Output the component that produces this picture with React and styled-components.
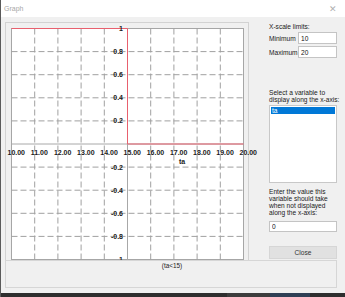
import React from 'react';
import styled, { createGlobalStyle } from 'styled-components';

const GlobalStyle = createGlobalStyle`
  html, body { margin: 0; padding: 0; background: #f0f0f0; }
  body { font-family: 'Liberation Sans', Arial, sans-serif; }
`;

const Window = styled.div`
  width: 345px;
  height: 297px;
  display: flex;
  flex-direction: column;
  background: #f0f0f0;
  box-sizing: border-box;
  border-left: 1px solid #5a5a5a;
  overflow: hidden;
`;

const TitleBar = styled.div`
  height: 17px;
  flex: none;
  background: #ffffff;
  display: flex;
  align-items: center;
  justify-content: space-between;
  padding: 0 8px 0 3px;
  color: #a8a8a8;
  font-size: 7px;
`;

const CloseX = styled.span`
  font-size: 9px;
  color: #b0b0b0;
`;

const Body = styled.div`
  flex: 1;
  display: flex;
  flex-direction: column;
  padding: 5px 8px 5px 4px;
`;

const TopRow = styled.div`
  height: 238px;
  display: flex;
  gap: 20px;
`;

const ChartPanel = styled.div`
  width: 244px;
  flex: none;
  box-sizing: border-box;
  border: 1px solid #d2d2d2;
  border-bottom: none;
  padding: 5px 4px 0 5px;
`;

const ChartSvg = styled.svg`
  display: block;
  overflow: visible;
`;

const SidePanel = styled.div`
  width: 68px;
  min-width: 0;
  flex: none;
  display: flex;
  flex-direction: column;
  padding-top: 1px;
  font-size: 6.6px;
  color: #1a1a1a;
`;

const Caption = styled.div`
  margin-top: ${p => p.$gap || 0}px;
  line-height: ${p => p.$lh || 7}px;
  white-space: nowrap;
`;

const LimitRow = styled.div`
  display: flex;
  align-items: center;
  height: 12px;
  margin-top: ${p => p.$gap || 0}px;
`;

const LimitLabel = styled.span`
  width: 29px;
  flex: none;
`;

const Field = styled.input`
  flex: ${p => (p.$full ? 'none' : 1)};
  width: ${p => (p.$full ? '68px' : '10px')};
  min-width: 0;
  height: ${p => p.$h || 12}px;
  margin: ${p => p.$gap || 0}px 0 0 0;
  box-sizing: border-box;
  border: 1px solid #c4c4c4;
  background: #ffffff;
  padding: 0 2px;
  font-family: inherit;
  font-size: 6.6px;
  color: #111;
  outline: none;
`;

const ListBox = styled.div`
  margin-top: 2px;
  height: 78px;
  box-sizing: border-box;
  border: 1px solid #c8c8c8;
  background: #ffffff;
  padding: 1px 1px 0 1px;
`;

const ListItem = styled.div`
  height: 7px;
  line-height: 7px;
  padding-left: 1px;
  background: ${p => (p.$selected ? '#0078d7' : 'transparent')};
  color: ${p => (p.$selected ? '#ffffff' : '#111')};
`;

const CloseButton = styled.button`
  margin-top: 14px;
  width: 68px;
  height: 13px;
  box-sizing: border-box;
  border: 1px solid #d6d6d6;
  background: #e1e1e1;
  color: #333;
  font-family: inherit;
  font-size: 6.6px;
  padding: 0;
`;

const StatusBox = styled.div`
  height: 28px;
  flex: none;
  box-sizing: border-box;
  border: 1px solid #d6d6d6;
  display: flex;
  justify-content: center;
  padding-left: 2px;
  font-size: 6.4px;
  line-height: 9px;
  color: #222;
`;

const Taskbar = styled.div`
  height: 4px;
  flex: none;
  display: flex;
  background: #2e2e2e;
`;

const TaskSegment = styled.div`
  width: ${p => p.$w}px;
  margin-left: ${p => p.$ml || 0}px;
  background: ${p => p.$c};
`;

const W = 232;
const H = 231;
const px = x => 0.5 + ((x - 10) / 10) * W;
const py = y => 0.5 + ((1 - y) / 2) * H;

const xTicks = [10, 11, 12, 13, 14, 15, 16, 17, 18, 19, 20];
const yTicks = [1, 0.8, 0.6, 0.4, 0.2, 0, -0.2, -0.4, -0.6, -0.8, -1];

const StepChart = () => (
  <ChartSvg width={233} height={232}>
    <defs>
      <clipPath id="labelClip">
        <rect x={-20} y={-10} width={280} height={242} />
      </clipPath>
    </defs>
    <rect x={0.5} y={0.5} width={W} height={H} fill="#ffffff" stroke="#a6a6a6" />
    {xTicks.slice(1, -1).filter(t => t !== 15).map(t => (
      <line key={'vx' + t} x1={px(t)} x2={px(t)} y1={0.5} y2={H + 0.5}
        stroke="#a0a0a0" strokeDasharray="6 3" />
    ))}
    {yTicks.slice(1, -1).filter(t => t !== 0).map(t => (
      <line key={'hy' + t} x1={0.5} x2={W + 0.5} y1={py(t)} y2={py(t)}
        stroke="#a0a0a0" strokeDasharray="6 3" />
    ))}
    <line x1={px(15)} x2={px(15)} y1={0.5} y2={H + 0.5} stroke="#a8a8a8" />
    <line x1={0.5} x2={W + 0.5} y1={py(0)} y2={py(0)} stroke="#a8a8a8" />
    <path d={`M ${px(10)} ${py(1)} H ${px(15)} V ${py(0)} H ${px(20)}`}
      fill="none" stroke="#e8606e" />
    <g clipPath="url(#labelClip)" fontFamily="'Liberation Sans', Arial, sans-serif"
      fontSize="7" fontWeight="bold" fill="#1a1a1a">
      {yTicks.filter(t => t !== 0).map(t => (
        <text key={'ly' + t} x={112} y={py(t) + 2.5} textAnchor="end">{t}</text>
      ))}
      {xTicks.map(t => (
        <text key={'lx' + t} x={px(t) - 4} y={126.5}>{t.toFixed(2)}</text>
      ))}
      <text x={171} y={135.5} textAnchor="middle">ta</text>
    </g>
  </ChartSvg>
);

export default function App() {
  return (
    <>
      <GlobalStyle />
      <Window>
        <TitleBar>
          <span>Graph</span>
          <CloseX>✕</CloseX>
        </TitleBar>
        <Body>
          <TopRow>
            <ChartPanel>
              <StepChart />
            </ChartPanel>
            <SidePanel>
              <Caption $lh={8}>X-scale limits:</Caption>
              <LimitRow $gap={1}>
                <LimitLabel>Minimum</LimitLabel>
                <Field defaultValue="10" />
              </LimitRow>
              <LimitRow $gap={2}>
                <LimitLabel>Maximum</LimitLabel>
                <Field defaultValue="20" />
              </LimitRow>
              <Caption $gap={31}>
                Select a variable to<br />display along the x-axis:
              </Caption>
              <ListBox>
                <ListItem $selected>ta</ListItem>
              </ListBox>
              <Caption $gap={5}>
                Enter the value this<br />variable should take<br />
                when not displayed<br />along the x-axis:
              </Caption>
              <Field $full $h={11} $gap={5} defaultValue="0" />
              <CloseButton>Close</CloseButton>
            </SidePanel>
          </TopRow>
          <StatusBox>(ta&lt;15)</StatusBox>
        </Body>
        <Taskbar>
          <TaskSegment $w={43} $ml={226} $c="#3c3c3c" />
          <TaskSegment $w={40} $c="#2f3f55" />
        </Taskbar>
      </Window>
    </>
  );
}
